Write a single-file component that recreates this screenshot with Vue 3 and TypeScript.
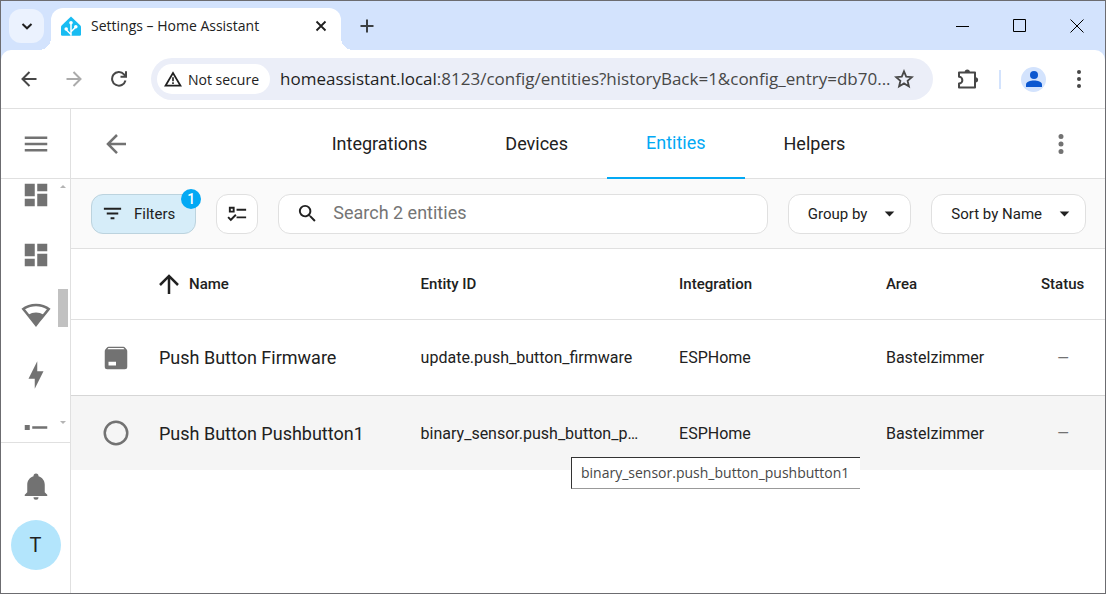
<script setup lang="ts">
import { ref } from 'vue'

interface Entity {
  icon: string
  name: string
  id: string
  integration: string
  area: string
}

const icons = {
  menu: 'M3,6H21V8H3V6M3,11H21V13H3V11M3,16H21V18H3V16Z',
  arrowLeft: 'M20,11V13H8L13.5,18.5L12.08,19.92L4.16,12L12.08,4.08L13.5,5.5L8,11H20Z',
  arrowUp: 'M13,20H11V8L5.5,13.5L4.08,12.08L12,4.16L19.92,12.08L18.5,13.5L13,8V20Z',
  dashboard: 'M13,3V9H21V3M13,21H21V11H13M3,21H11V15H3M3,13H11V3H3V13Z',
  wifi: 'M12,3C7.79,3 3.7,4.41 0.38,7C4.41,12.06 7.89,16.37 12,21.5C16.08,16.42 20.24,11.24 23.65,7C20.32,4.41 16.22,3 12,3M12,5C15.07,5 18.09,5.86 20.71,7.45L17.5,11.43C16.26,10.74 14.37,10 12,10C9.62,10 7.74,10.75 6.5,11.43L3.27,7.44C5.91,5.85 8.93,5 12,5Z',
  flash: 'M11 15H6L13 1V9H18L11 23V15Z',
  list: 'M3,4H7V8H3V4M9,5V7H21V5H9M3,10H7V14H3V10M9,11V13H21V11H9M3,16H7V20H3V16M9,17V19H21V17H9',
  bell: 'M21,19V20H3V19L5,17V11C5,7.9 7.03,5.17 10,4.29C10,4.19 10,4.1 10,4A2,2 0 0,1 12,2A2,2 0 0,1 14,4C14,4.1 14,4.19 14,4.29C16.97,5.17 19,7.9 19,11V17L21,19M14,21A2,2 0 0,1 12,23A2,2 0 0,1 10,21',
  dots: 'M12,16A2,2 0 0,1 14,18A2,2 0 0,1 12,20A2,2 0 0,1 10,18A2,2 0 0,1 12,16M12,10A2,2 0 0,1 14,12A2,2 0 0,1 12,14A2,2 0 0,1 10,12A2,2 0 0,1 12,10M12,4A2,2 0 0,1 14,6A2,2 0 0,1 12,8A2,2 0 0,1 10,6A2,2 0 0,1 12,4Z',
  filter: 'M6,13H18V11H6M3,6V8H21V6M10,18H14V16H10V18Z',
  checks: 'M3,5H9V11H3V5M5,7V9H7V7H5M11,7H21V9H11V7M11,15H21V17H11V15M5,20L1.5,16.5L2.91,15.09L5,17.17L9.59,12.59L11,14L5,20Z',
  search: 'M9.5,3A6.5,6.5 0 0,1 16,9.5C16,11.11 15.41,12.59 14.44,13.73L14.71,14H15.5L20.5,19L19,20.5L14,15.5V14.71L13.73,14.44C12.59,15.41 11.11,16 9.5,16A6.5,6.5 0 0,1 3,9.5A6.5,6.5 0 0,1 9.5,3M9.5,5C7,5 5,7 5,9.5C5,12 7,14 9.5,14C12,14 14,12 14,9.5C14,7 12,5 9.5,5Z',
  menuDown: 'M7,10L12,15L17,10H7Z',
  pack: 'M5.12,5H18.87L17.93,4H5.93L5.12,5M20.54,5.23C20.83,5.57 21,6 21,6.5V19A2,2 0 0,1 19,21H5A2,2 0 0,1 3,19V6.5C3,6 3.17,5.57 3.46,5.23L4.84,3.55C5.12,3.21 5.53,3 6,3H18C18.47,3 18.88,3.21 19.15,3.55L20.54,5.23M6,18H12V15H6V18Z',
  circle: 'M12,20A8,8 0 0,1 4,12A8,8 0 0,1 12,4A8,8 0 0,1 20,12A8,8 0 0,1 12,20M12,2A10,10 0 0,0 2,12A10,10 0 0,0 12,22A10,10 0 0,0 22,12A10,10 0 0,0 12,2Z',
}

const sideLinks = [
  { label: 'Overview', icon: icons.dashboard },
  { label: 'Dashboard', icon: icons.dashboard },
  { label: 'Network', icon: icons.wifi },
  { label: 'Energy', icon: icons.flash },
  { label: 'Logbook', icon: icons.list },
]
const tabs = ['Integrations', 'Devices', 'Entities', 'Helpers']
const activeTab = ref('Entities')
const query = ref('')

const entities: Entity[] = [
  { icon: icons.pack, name: 'Push Button Firmware', id: 'update.push_button_firmware', integration: 'ESPHome', area: 'Bastelzimmer' },
  { icon: icons.circle, name: 'Push Button Pushbutton1', id: 'binary_sensor.push_button_pushbutton1', integration: 'ESPHome', area: 'Bastelzimmer' },
]
const hovered = ref(1)

const maxIdLength = 27
function shorten(id: string): string {
  return id.length > maxIdLength ? id.slice(0, maxIdLength) + '…' : id
}
</script>

<template>
  <div class="window">
    <header class="titlebar">
      <button class="tab-search" aria-label="Search tabs">
        <svg width="12" height="12" viewBox="0 0 12 12"><path d="M1.500 4L6 8.300 10.500 4" fill="none" stroke="#1f1f1f" stroke-width="2" /></svg>
      </button>
      <div class="browser-tab">
        <svg class="favicon" width="20" height="20" viewBox="0 0 20 20">
          <path d="M10 0.4L19.4 9.6Q20 10.3 20 11.2V18.6Q20 19.8 18.8 19.8H1.2Q0 19.8 0 18.6V11.2Q0 10.3 0.6 9.6Z" fill="#18bcf2" />
          <g fill="none" stroke="#fff" stroke-width="1.5"><path d="M10 19.8V7M10 18.5L5.2 13.8M10 15.8L14.6 11.3" /></g>
          <g fill="#fff"><circle cx="10" cy="6.8" r="1.800" /><circle cx="5.200" cy="13" r="1.800" /><circle cx="14.800" cy="10.8" r="1.800" /></g>
        </svg>
        <span class="tab-title">Settings – Home Assistant</span>
        <button class="plain" aria-label="Close tab">
          <svg width="12" height="12" viewBox="0 0 12 12"><path d="M1.5 1.5l9 9m0-9l-9 9" stroke="#1f1f1f" stroke-width="1.8" /></svg>
        </button>
      </div>
      <button class="plain new-tab" aria-label="New tab">
        <svg width="14" height="14" viewBox="0 0 14 14"><path d="M7 0.500v13M0.500 7h13" stroke="#3c4043" stroke-width="2" /></svg>
      </button>
      <div class="window-controls">
        <button class="plain" aria-label="Minimize"><svg width="14" height="14" viewBox="0 0 14 14"><path d="M0 7.500h13" stroke="#000" /></svg></button>
        <button class="plain" aria-label="Maximize"><svg width="14" height="14" viewBox="0 0 14 14"><path d="M.5.5h12v12h-12z" fill="none" stroke="#000" /></svg></button>
        <button class="plain" aria-label="Close"><svg width="14" height="14" viewBox="0 0 14 14"><path d="M.5.5l13 13m0-13l-13 13" stroke="#000" /></svg></button>
      </div>
    </header>

    <div class="addressbar">
      <nav class="history">
        <button class="plain" aria-label="Back"><svg width="16" height="16" viewBox="0 0 16 16"><path d="M15.500 8H2M8.500 1L1.500 8l7 7" fill="none" stroke="#474747" stroke-width="2" /></svg></button>
        <button class="plain" aria-label="Forward"><svg width="16" height="16" viewBox="0 0 16 16"><path d="M.5 8H14M7.500 1l7 7-7 7" fill="none" stroke="#ababab" stroke-width="2" /></svg></button>
        <button class="plain" aria-label="Reload"><svg width="16" height="16" viewBox="0 0 16 16"><path d="M14.500 9.500A6.800 6.800 0 1 1 13 3.300L14.500 5M15 .3V5.800H9.500" fill="none" stroke="#474747" stroke-width="2" /></svg></button>
      </nav>
      <div class="omnibox">
        <button class="security">
          <svg width="18" height="16" viewBox="0 0 18 16"><path d="M9 2L16.500 14.700H1.500Z" fill="none" stroke="#1f1f1f" stroke-width="1.700" /><path d="M9 6.200v4M9 11.200v1.700" stroke="#1f1f1f" stroke-width="1.600" /></svg>
          <span>Not secure</span>
        </button>
        <div class="url"><span class="host">homeassistant.local</span>:8123/config/entities?historyBack=1&amp;config_entry=db70...</div>
        <button class="plain star" aria-label="Bookmark this tab"><svg width="20" height="20" viewBox="0 0 20 20"><path d="M10 2.300l2.200 5.300 5.700.5-4.300 3.700 1.300 5.600L10 14.400l-4.900 3 1.300-5.600-4.300-3.700 5.700-.5z" fill="none" stroke="#474747" stroke-width="1.800" /></svg></button>
      </div>
      <div class="browser-actions">
        <button class="plain" aria-label="Extensions"><svg width="22" height="22" viewBox="0 0 22 22"><path d="M2 4.500H18V19.500H2V15.500A3.200 3.200 0 0 0 2 8.800Z" fill="none" stroke="#474747" stroke-width="2" stroke-linejoin="round" /><path d="M7.700 4a2.600 2.600 0 0 1 5.200 0zM18.500 9.200a2.600 2.600 0 0 1 0 5.200z" fill="#474747" /></svg></button>
        <span class="divider"></span>
        <button class="profile" aria-label="Profile"><svg width="16" height="16" viewBox="0 0 16 16" fill="#0b57d0"><circle cx="8" cy="4" r="4" /><path d="M0 16v-2.500C0 10.800 4.500 9.600 8 9.600s8 1.200 8 3.900V16z" /></svg></button>
        <button class="plain" aria-label="Browser menu"><svg width="4" height="18" viewBox="0 0 4 18" fill="#474747"><circle cx="2" cy="2" r="2" /><circle cx="2" cy="9" r="2" /><circle cx="2" cy="16" r="2" /></svg></button>
      </div>
    </div>

    <div class="app">
      <aside class="sidebar">
        <div class="side-top">
          <button class="plain" aria-label="Toggle sidebar"><svg class="icon" viewBox="0 0 24 24"><path :d="icons.menu" /></svg></button>
        </div>
        <div class="side-scroll">
          <nav class="side-nav">
            <a v-for="link in sideLinks" :key="link.label" href="#" :aria-label="link.label"><svg class="icon" viewBox="0 0 24 24"><path :d="link.icon" /></svg></a>
          </nav>
          <div class="scrollbar">
            <svg width="6" height="3" viewBox="0 0 6 3"><path d="M0 3L3 0l3 3z" /></svg>
            <span class="thumb"></span>
            <svg width="6" height="3" viewBox="0 0 6 3"><path d="M0 0l3 3 3-3z" /></svg>
          </div>
        </div>
        <div class="side-bottom">
          <button class="plain" aria-label="Notifications"><svg class="icon" viewBox="0 0 24 24"><path :d="icons.bell" /></svg></button>
          <a class="avatar" href="#">T</a>
        </div>
      </aside>

      <main class="content">
        <header class="app-header">
          <button class="plain" aria-label="Back"><svg class="icon" viewBox="0 0 24 24"><path :d="icons.arrowLeft" /></svg></button>
          <nav class="tabs">
            <a v-for="tab in tabs" :key="tab" href="#" :class="{ active: tab === activeTab }" @click.prevent="activeTab = tab">{{ tab }}</a>
          </nav>
          <button class="plain" aria-label="More"><svg class="icon" viewBox="0 0 24 24"><path :d="icons.dots" /></svg></button>
        </header>

        <div class="toolbar">
          <button class="chip filters">
            <svg class="icon small" viewBox="0 0 24 24"><path :d="icons.filter" /></svg>
            Filters
            <span class="badge">1</span>
          </button>
          <button class="chip select" aria-label="Selection mode"><svg class="icon small" viewBox="0 0 24 24"><path :d="icons.checks" /></svg></button>
          <label class="search">
            <svg class="icon small" viewBox="0 0 24 24"><path :d="icons.search" /></svg>
            <input v-model="query" type="text" aria-label="Search entities" placeholder="Search 2 entities" />
          </label>
          <button class="chip">Group by<svg class="icon small" viewBox="0 0 24 24"><path :d="icons.menuDown" /></svg></button>
          <button class="chip">Sort by Name<svg class="icon small" viewBox="0 0 24 24"><path :d="icons.menuDown" /></svg></button>
        </div>

        <table>
          <thead>
            <tr>
              <th class="col-icon"></th>
              <th><span class="sorted"><svg class="icon" viewBox="0 0 24 24"><path :d="icons.arrowUp" /></svg>Name</span></th>
              <th class="col-id">Entity ID</th>
              <th class="col-integration">Integration</th>
              <th class="col-area">Area</th>
              <th class="col-status">Status</th>
            </tr>
          </thead>
          <tbody>
            <tr v-for="(entity, i) in entities" :key="entity.id" :class="{ hovered: hovered === i }" @mouseenter="hovered = i">
              <td class="col-icon"><svg class="icon" viewBox="0 0 24 24"><path :d="entity.icon" /></svg></td>
              <td class="name">{{ entity.name }}</td>
              <td>{{ shorten(entity.id) }}</td>
              <td>{{ entity.integration }}</td>
              <td>{{ entity.area }}</td>
              <td class="status">—</td>
            </tr>
          </tbody>
        </table>
        <div class="tooltip" role="tooltip">{{ entities[1].id }}</div>
      </main>
    </div>
  </div>
</template>

<style>
body {
  margin: 0;
}
</style>

<style scoped>
* {
  box-sizing: border-box;
}
button {
  font: inherit;
  color: inherit;
  cursor: pointer;
}
a {
  color: inherit;
  text-decoration: none;
}
svg {
  display: block;
  flex: none;
}
.window {
  display: flex;
  flex-direction: column;
  min-height: 100vh;
  border: 1px solid #6c6c70;
  background: #d3e3fd;
  color: #212121;
  font-family: "Open Sans", "Noto Sans", sans-serif;
}
.plain {
  display: flex;
  padding: 0;
  border: 0;
  background: none;
}
.titlebar {
  display: flex;
  align-items: center;
  height: 49px;
  padding-left: 8px;
}
.tab-search {
  display: grid;
  place-items: center;
  width: 35px;
  height: 34px;
  padding: 0;
  border: 0;
  border-radius: 12px;
  background: #ebf2fe;
}
.browser-tab {
  position: relative;
  display: flex;
  align-items: center;
  align-self: flex-end;
  gap: 10px;
  width: 290px;
  height: 42px;
  margin-left: 7px;
  padding: 0 14px 6px 10px;
  border-radius: 12px 12px 0 0;
  background: #fff;
}
.browser-tab::before,
.browser-tab::after {
  content: "";
  position: absolute;
  bottom: 0;
  width: 12px;
  height: 12px;
}
.browser-tab::before {
  right: 100%;
  background: radial-gradient(circle at 0 0, transparent 12px, #fff 12px);
}
.browser-tab::after {
  left: 100%;
  background: radial-gradient(circle at 100% 0, transparent 12px, #fff 12px);
}
.tab-title {
  flex: 1;
  font-size: 14px;
  line-height: 20px;
  white-space: nowrap;
}
.new-tab {
  margin-left: 19px;
}
.window-controls {
  display: flex;
  gap: 43px;
  margin-left: auto;
  padding-right: 21px;
}
.addressbar {
  display: flex;
  align-items: center;
  height: 59px;
  padding: 0 24px 0 20px;
  border-bottom: 1px solid #e0e0e0;
  border-radius: 10px 10px 0 0;
  background: #fff;
}
.history {
  display: flex;
  gap: 29px;
}
.omnibox {
  display: flex;
  flex: 1;
  align-items: center;
  min-width: 0;
  height: 42px;
  margin-left: 24px;
  padding: 0 19px 0 6px;
  border-radius: 21px;
  background: #ebeef8;
}
.security {
  display: flex;
  flex: none;
  align-items: center;
  gap: 6px;
  height: 30px;
  padding: 0 11px 0 7px;
  border: 0;
  border-radius: 15px;
  background: #fff;
  font-size: 14px;
}
.url {
  flex: 1;
  min-width: 0;
  margin-left: 10px;
  color: #474747;
  font-size: 17px;
  line-height: 26px;
  white-space: nowrap;
}
.host {
  color: #1f1f1f;
}
.browser-actions {
  display: flex;
  align-items: center;
  margin-left: 24px;
}
.divider {
  width: 2px;
  height: 19px;
  margin: 0 20px;
  background: #d3e3fd;
}
.profile {
  display: grid;
  place-items: center;
  width: 25px;
  height: 25px;
  margin-right: 31px;
  padding: 0;
  border: 0;
  border-radius: 50%;
  background: #d3e3fd;
}
.app {
  display: flex;
  flex: 1;
  background: #fff;
  font-family: Roboto, sans-serif;
}
.icon {
  width: 30px;
  height: 30px;
  fill: currentColor;
}
.icon.small {
  width: 23px;
  height: 23px;
}
.sidebar {
  display: flex;
  flex-direction: column;
  width: 70px;
  border-right: 1px solid #e0e0e0;
  color: #727272;
}
.side-top {
  display: flex;
  align-items: center;
  height: 70px;
  padding-left: 20px;
  border-bottom: 1px solid #e0e0e0;
}
.side-scroll {
  display: flex;
  flex: 1 1 0;
  justify-content: space-between;
  min-height: 0;
  margin-bottom: 12px;
  overflow: hidden;
}
.side-nav {
  display: flex;
  flex-direction: column;
  gap: 30px;
  height: 0;
  padding: 1px 0 0 20px;
}
.scrollbar {
  display: flex;
  flex-direction: column;
  align-items: center;
  width: 10px;
  margin-right: 2px;
  padding: 6px 0;
  fill: #b4b4b4;
}
.thumb {
  width: 10px;
  height: 38px;
  margin: auto 0 94px;
  background: #c1c1c1;
}
.side-bottom {
  display: flex;
  flex-direction: column;
  align-items: center;
  gap: 19px;
  padding: 28px 0 23px;
  border-top: 1px solid #e0e0e0;
}
.avatar {
  display: grid;
  place-items: center;
  width: 50px;
  height: 50px;
  border-radius: 50%;
  background: #b3e5fc;
  color: #212121;
  font-size: 20px;
}
.content {
  position: relative;
  flex: 1;
  min-width: 0;
}
.app-header {
  display: flex;
  align-items: center;
  justify-content: space-between;
  height: 70px;
  padding: 0 29px 0 30px;
  border-bottom: 1px solid #e0e0e0;
  color: #727272;
}
.tabs {
  display: flex;
  height: 70px;
  margin-bottom: -1px;
  color: #212121;
  font-size: 18px;
}
.tabs a {
  display: flex;
  align-items: center;
  padding: 0 39px 2px;
  border-bottom: 0 solid #03a9f4;
}
.tabs a.active {
  border-bottom-width: 2px;
  color: #03a9f4;
}
.toolbar {
  display: flex;
  align-items: center;
  gap: 20px;
  height: 70px;
  padding: 0 19px 0 20px;
  border-bottom: 1px solid #e0e0e0;
  background: #fafafa;
}
.chip {
  position: relative;
  display: flex;
  flex: none;
  align-items: center;
  gap: 11px;
  height: 40px;
  padding: 0 9px 0 19px;
  border: 1px solid #e0e0e0;
  border-radius: 12px;
  background: #fff;
  font-size: 15px;
}
.filters {
  gap: 10px;
  padding: 0 20px 0 9px;
  border-color: #bcd3de;
  background: #d6edf9;
}
.select {
  justify-content: center;
  width: 42px;
  padding: 0;
}
.badge {
  position: absolute;
  top: -6px;
  right: -6px;
  width: 20px;
  height: 20px;
  border-radius: 50%;
  background: #03a9f4;
  color: #fff;
  font-size: 14px;
  font-weight: 500;
  line-height: 20px;
  text-align: center;
}
.search {
  display: flex;
  flex: 1;
  align-items: center;
  gap: 14px;
  min-width: 0;
  height: 40px;
  padding: 0 17px;
  border: 1px solid #e0e0e0;
  border-radius: 12px;
  background: #fff;
}
.search input {
  flex: 1;
  min-width: 0;
  padding: 0 0 2px;
  border: 0;
  outline: 0;
  background: none;
  font: 18px/24px Roboto, sans-serif;
}
.search input::placeholder {
  color: #757575;
  opacity: 1;
}
table {
  width: 100%;
  border-collapse: separate;
  border-spacing: 0;
  table-layout: fixed;
}
th,
td {
  padding: 0 15px;
  text-align: left;
  white-space: nowrap;
}
th {
  height: 71px;
  border-bottom: 1px solid #e0e0e0;
  font-size: 15px;
  font-weight: 500;
}
td {
  height: 74px;
  font-size: 16px;
}
tbody tr:first-child td {
  height: 76px;
  border-bottom: 1px solid #d6d6d6;
}
.hovered td {
  background: #f5f5f5;
}
.col-icon {
  width: 73px;
  padding: 0 0 0 30px;
  color: #727272;
}
.col-id {
  width: 25%;
}
.col-integration {
  width: 20%;
}
.col-area {
  width: 15%;
}
.col-status {
  width: 79px;
}
.sorted {
  display: flex;
  align-items: center;
  gap: 5px;
  margin-left: -5px;
}
td.name {
  font-size: 18px;
}
td.status {
  padding-right: 36px;
  color: #727272;
  font-size: 15px;
  text-align: right;
}
.tooltip {
  position: absolute;
  top: 348px;
  left: 500px;
  padding: 5px 11px 5px 9px;
  border: solid #333;
  border-width: 1px 0 1px 1px;
  border-bottom-color: #999;
  background: #fff;
  color: #474747;
  font: 14px/20px "Open Sans", "Noto Sans", sans-serif;
}
</style>
